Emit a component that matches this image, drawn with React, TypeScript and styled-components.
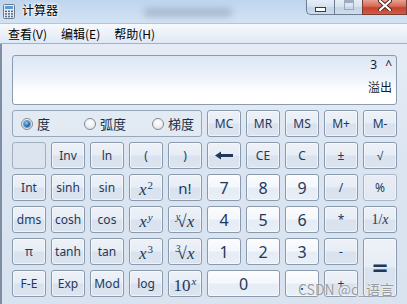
import React from "react";
import styled, { createGlobalStyle, css } from "styled-components";

const GlobalStyle = createGlobalStyle`
  html, body { margin: 0; padding: 0; width: 407px; height: 304px; overflow: hidden; background: #dae4f1; }
  * { box-sizing: border-box; }
`;

const Window = styled.div`
  position: relative;
  width: 407px;
  height: 304px;
  overflow: hidden;
  display: flex;
  flex-direction: column;
  font-family: "Noto Sans", "Noto Sans CJK SC", sans-serif;
`;

const TitleBar = styled.div`
  height: 23px;
  flex: none;
  display: flex;
  align-items: flex-start;
  background: linear-gradient(180deg, #bfd5ed 0%, #c9dcf1 55%, #d3e3f4 100%);
  overflow: hidden;
`;

const AppIcon = styled.div`
  flex: none;
  margin: 4px 0 0 3px;
  display: flex;
`;

const Title = styled.div`
  margin: 2px 0 0 7px;
  font: 12px/16px "Noto Sans CJK SC", sans-serif;
  color: #000;
  text-shadow: 0 0 5px #fff, 0 0 3px #fff, 0 0 2px #fff;
`;

const GlassBlur = styled.div`
  width: 88px;
  height: 9px;
  margin: 8px 0 0 86px;
  border-radius: 5px;
  background: rgba(110, 125, 150, 0.35);
  filter: blur(3px);
`;

const WinButtons = styled.div`
  margin-left: auto;
  display: flex;
  height: 15px;
`;

const WinBtn = styled.div<{ $kind: "min" | "max" | "close" }>`
  height: 15px;
  display: flex;
  align-items: center;
  justify-content: center;
  border: 1px solid #6d7e94;
  border-top: none;
  ${(p) =>
    p.$kind === "close"
      ? css`
          width: 45px;
          border-color: #7a3c34;
          background: linear-gradient(180deg, #e6a293 0%, #d66a55 45%, #c6422c 55%, #d25a44 100%);
        `
      : css`
          width: 28px;
          border-right: none;
          background: linear-gradient(180deg, #e6eef7 0%, #d7e3f0 45%, #c4d4e6 55%, #cfdcec 100%);
        `}
  ${(p) =>
    p.$kind === "min" &&
    css`
      border-bottom-left-radius: 5px;
    `}
`;

const MinGlyph = styled.div`
  width: 11px;
  height: 5px;
  margin-top: 4px;
  background: #fff;
  border: 1px solid #2f3f55;
`;

const MaxGlyph = styled.div`
  width: 10px;
  height: 10px;
  margin-top: -4px;
  border: 1px solid #8d9cb0;
  border-top-width: 3px;
  opacity: 0.8;
`;

const MenuBar = styled.div`
  height: 21px;
  flex: none;
  display: flex;
  align-items: center;
  padding-left: 1px;
  border-top: 1px solid #b4c5d9;
  border-bottom: 1px solid #a2b2c5;
  background: linear-gradient(180deg, #f6f9fd 0%, #edf2f9 50%, #dfe8f4 100%);
`;

const MenuItem = styled.span`
  padding: 0 7px;
  font: 12px/16px "Noto Sans CJK SC", sans-serif;
  color: #000;
`;

const Client = styled.div`
  flex: 1;
  display: flex;
  flex-direction: column;
  gap: 5px;
  padding: 11px 10px 0 10px;
  border-left: 2px solid #7f8fa3;
  background: linear-gradient(180deg, #e5ecf6 0%, #dbe5f1 45%, #d9e3f0 100%);
`;

const Display = styled.div`
  height: 50px;
  flex: none;
  display: flex;
  flex-direction: column;
  align-items: flex-end;
  justify-content: space-between;
  padding: 1px 4px 8px 0;
  border: 1px solid #8b9bb0;
  border-radius: 3px;
  background: linear-gradient(180deg, #dbe6f5 0%, #eef3fa 45%, #ffffff 75%);
  font: 12px/16px "Noto Sans", "Noto Sans CJK SC", sans-serif;
  color: #1a1a1a;
`;

const Expr = styled.div`
  display: flex;
  gap: 8px;
`;

const Keypad = styled.div`
  display: grid;
  grid-template-columns: repeat(10, 34px);
  grid-auto-rows: 27px;
  column-gap: 5px;
  row-gap: 5px;
`;

const RadioGroup = styled.div`
  grid-column: span 5;
  display: grid;
  grid-template-columns: 63px 68px auto;
  align-items: center;
  padding-left: 8px;
  border: 1px solid #98a7b9;
  border-radius: 3px;
  background: rgba(255, 255, 255, 0.12);
`;

const RadioOption = styled.label`
  display: flex;
  align-items: center;
  gap: 4px;
  font: 13px/16px "Noto Sans CJK SC", sans-serif;
  color: #1e2f45;
`;

const RadioCircle = styled.span<{ $on?: boolean }>`
  width: 12px;
  height: 12px;
  border-radius: 50%;
  border: 1px solid #858b93;
  background: radial-gradient(circle at 50% 35%, #ffffff 0%, #eef0f3 55%, #cdd3da 100%);
  display: flex;
  align-items: center;
  justify-content: center;
  &::after {
    content: "";
    width: 6px;
    height: 6px;
    border-radius: 50%;
    display: ${(p) => (p.$on ? "block" : "none")};
    background: radial-gradient(circle at 40% 35%, #8fd4ff 0%, #1f74c6 50%, #0b3f7c 100%);
    box-shadow: 0 0 0 1px rgba(20, 60, 110, 0.5);
  }
`;

type Variant = "fn" | "num" | "blank" | "off";

const Key = styled.button<{ $v: Variant; $cs?: number; $rs?: number }>`
  grid-column: span ${(p) => p.$cs ?? 1};
  grid-row: span ${(p) => p.$rs ?? 1};
  margin: 0;
  padding: 0;
  display: flex;
  align-items: center;
  justify-content: center;
  border-radius: 3px;
  border: 1px solid #8a9aae;
  color: #1e395b;
  font: 12px/14px "Noto Sans", sans-serif;
  box-shadow: inset 0 0 0 1px rgba(255, 255, 255, 0.55);
  ${(p) =>
    p.$v === "num"
      ? css`
          font-size: 16px;
          background: linear-gradient(180deg, #fbfcfe 0%, #f4f7fb 48%, #e6ecf5 52%, #e9eff7 100%);
        `
      : p.$v === "blank"
      ? css`
          border-color: #a3afbf;
          box-shadow: none;
          background: #dbe4ef;
        `
      : p.$v === "off"
      ? css`
          border-color: #aab6c6;
          box-shadow: inset 0 0 0 1px rgba(255, 255, 255, 0.35);
          background: linear-gradient(180deg, #e8edf5 0%, #e2e8f1 100%);
        `
      : css`
          background: linear-gradient(180deg, #eef2f8 0%, #e7edf5 48%, #d9e2ee 52%, #dce4ef 100%);
        `}
`;

const MathLabel = styled.span<{ $size?: number }>`
  font-family: "Liberation Serif", "DejaVu Serif", serif;
  font-size: ${(p) => p.$size ?? 17}px;
  line-height: 16px;
  color: #1e395b;
  white-space: nowrap;
`;

const It = styled.i`
  font-style: italic;
`;

const Sup = styled.span<{ $italic?: boolean }>`
  font-size: 11px;
  vertical-align: 6px;
  margin-left: 1px;
  font-style: ${(p) => (p.$italic ? "italic" : "normal")};
`;

const RootIndex = styled.span`
  font-size: 10px;
  font-style: italic;
  vertical-align: 7px;
  margin-right: -3px;
`;

const BigText = styled.span`
  font-size: 15px;
`;

const Equals = styled.span`
  font: 700 21px/20px "DejaVu Sans", sans-serif;
  color: #1e395b;
`;

const Watermark = styled.div`
  position: absolute;
  left: 298px;
  top: 280px;
  font: 14px/18px "Noto Sans CJK SC", sans-serif;
  color: rgba(140, 140, 140, 0.85);
  text-shadow: 0 0 2px rgba(255, 255, 255, 0.9);
  white-space: nowrap;
  pointer-events: none;
`;

const BackArrow = () => (
  <svg width="18" height="9" viewBox="0 0 18 9">
    <path d="M0 4.5 L6 0.5 L6 8.5 Z" fill="#1e395b" />
    <rect x="5" y="3" width="13" height="3" fill="#1e395b" />
  </svg>
);

const CalcIcon = () => (
  <svg width="12" height="15" viewBox="0 0 12 15">
    <rect x="0.5" y="0.5" width="11" height="14" rx="1" fill="#e9eef4" stroke="#6c7b8e" />
    <rect x="2" y="2" width="8" height="3" fill="#5d9ad8" />
    {[0, 1, 2].map((r) =>
      [0, 1, 2].map((c) => (
        <rect key={`${r}-${c}`} x={2 + c * 3} y={6.5 + r * 2.6} width="2" height="1.6" fill="#54708f" />
      ))
    )}
  </svg>
);

const CloseGlyph = () => (
  <svg width="14" height="11" viewBox="0 0 14 11" style={{ marginTop: -3 }}>
    <path d="M2 1 L12 10 M12 1 L2 10" stroke="#4a2420" strokeWidth="4" strokeLinecap="round" />
    <path d="M2 1 L12 10 M12 1 L2 10" stroke="#ffffff" strokeWidth="2.2" strokeLinecap="round" />
  </svg>
);

type KeyDef = { l: React.ReactNode; v?: Variant; cs?: number; rs?: number };

const keys: KeyDef[] = [
  { l: "", v: "blank" },
  { l: "Inv" },
  { l: "ln" },
  { l: "(" },
  { l: ")" },
  { l: <BackArrow /> },
  { l: "CE" },
  { l: "C" },
  { l: "±" },
  { l: "√" },

  { l: "Int" },
  { l: "sinh" },
  { l: "sin" },
  { l: <MathLabel><It>x</It><Sup>2</Sup></MathLabel> },
  { l: <BigText>n!</BigText> },
  { l: "7", v: "num" },
  { l: "8", v: "num" },
  { l: "9", v: "num" },
  { l: "/" },
  { l: "%", v: "off" },

  { l: "dms" },
  { l: "cosh" },
  { l: "cos" },
  { l: <MathLabel><It>x</It><Sup $italic>y</Sup></MathLabel> },
  { l: <MathLabel><RootIndex>y</RootIndex>√<It>x</It></MathLabel> },
  { l: "4", v: "num" },
  { l: "5", v: "num" },
  { l: "6", v: "num" },
  { l: "*" },
  { l: <MathLabel $size={14}>1/<It>x</It></MathLabel> },

  { l: "π" },
  { l: "tanh" },
  { l: "tan" },
  { l: <MathLabel><It>x</It><Sup>3</Sup></MathLabel> },
  { l: <MathLabel><RootIndex>3</RootIndex>√<It>x</It></MathLabel> },
  { l: "1", v: "num" },
  { l: "2", v: "num" },
  { l: "3", v: "num" },
  { l: "-" },
  { l: <Equals>=</Equals>, rs: 2 },

  { l: "F-E" },
  { l: "Exp" },
  { l: "Mod" },
  { l: "log" },
  { l: <MathLabel>10<Sup $italic>x</Sup></MathLabel> },
  { l: "0", v: "num", cs: 2 },
  { l: ".", v: "num" },
  { l: "+" },
];

const memory = ["MC", "MR", "MS", "M+", "M-"];

export default function App() {
  return (
    <>
      <GlobalStyle />
      <Window>
        <TitleBar>
          <AppIcon>
            <CalcIcon />
          </AppIcon>
          <Title>计算器</Title>
          <GlassBlur />
          <WinButtons>
            <WinBtn $kind="min">
              <MinGlyph />
            </WinBtn>
            <WinBtn $kind="max">
              <MaxGlyph />
            </WinBtn>
            <WinBtn $kind="close">
              <CloseGlyph />
            </WinBtn>
          </WinButtons>
        </TitleBar>
        <MenuBar>
          <MenuItem>查看(V)</MenuItem>
          <MenuItem>编辑(E)</MenuItem>
          <MenuItem>帮助(H)</MenuItem>
        </MenuBar>
        <Client>
          <Display>
            <Expr>
              <span>3</span>
              <span>^</span>
            </Expr>
            <div>溢出</div>
          </Display>
          <Keypad>
            <RadioGroup>
              <RadioOption>
                <RadioCircle $on />
                度
              </RadioOption>
              <RadioOption>
                <RadioCircle />
                弧度
              </RadioOption>
              <RadioOption>
                <RadioCircle />
                梯度
              </RadioOption>
            </RadioGroup>
            {memory.map((m) => (
              <Key key={m} $v="fn">
                {m}
              </Key>
            ))}
            {keys.map((k, i) => (
              <Key key={i} $v={k.v ?? "fn"} $cs={k.cs} $rs={k.rs}>
                {k.l}
              </Key>
            ))}
          </Keypad>
        </Client>
        <Watermark>CSDN @c_语言</Watermark>
      </Window>
    </>
  );
}
